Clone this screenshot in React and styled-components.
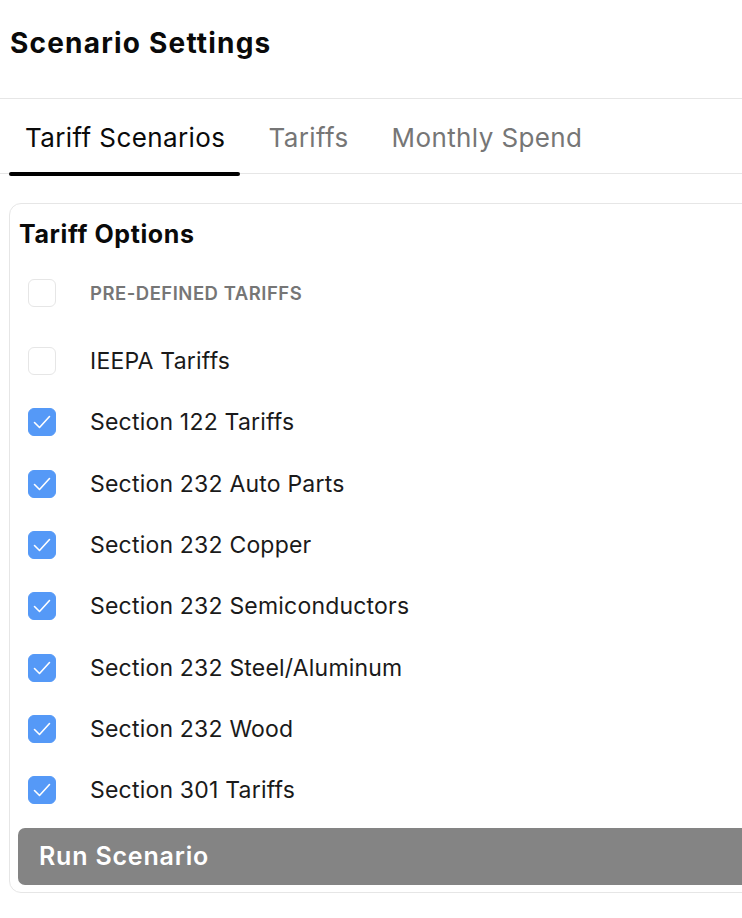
import React from "react";
import styled, { createGlobalStyle } from "styled-components";

const Global = createGlobalStyle`
  html, body { margin: 0; padding: 0; background: #fff; overflow: hidden; }
  body { font-family: Inter, "Noto Sans", "Liberation Sans", sans-serif; color: #111; }
`;

const Page = styled.div`
  width: 820px;
`;

const Header = styled.div`
  height: 99px;
  border-bottom: 1px solid #e6e6e6;
  padding: 26px 0 0 10px;
  box-sizing: border-box;
`;

const Title = styled.h1`
  margin: 0;
  font-size: 28px;
  line-height: 34px;
  font-weight: 700;
  letter-spacing: 1.2px;
  color: #0a0a0a;
`;

const TabBar = styled.div`
  display: flex;
  gap: 12px;
  height: 75px;
  padding-left: 9px;
  border-bottom: 1px solid #e6e6e6;
  box-sizing: border-box;
`;

const Tab = styled.div`
  position: relative;
  display: flex;
  align-items: center;
  padding: 2px 15px 0 16px;
  font-size: 26px;
  letter-spacing: 0.4px;
  color: ${(p) => (p.$active ? "#0a0a0a" : "#767676")};
  &::after {
    content: "";
    display: ${(p) => (p.$active ? "block" : "none")};
    position: absolute;
    left: 0;
    right: 0;
    bottom: -3px;
    height: 4px;
    border-radius: 2px;
    background: #000;
  }
`;

const Body = styled.div`
  padding: 29px 0 0 9px;
`;

const Card = styled.div`
  border: 1px solid #e6e6e6;
  border-radius: 12px;
  padding: 14px 8px 7px 8px;
`;

const CardTitle = styled.h2`
  margin: 0 0 0 1px;
  font-size: 25px;
  line-height: 32px;
  font-weight: 700;
  letter-spacing: 0.6px;
  color: #0a0a0a;
`;

const List = styled.div`
  display: flex;
  flex-direction: column;
  margin-top: 11px;
`;

const Row = styled.label`
  display: flex;
  align-items: center;
  height: ${(p) => (p.$header ? "69.5px" : "61.3px")};
  padding: 0 0 ${(p) => (p.$header ? "6.5px" : "0")} 10px;
  box-sizing: border-box;
`;

const Box = styled.span`
  width: 28px;
  height: 28px;
  box-sizing: border-box;
  border-radius: 6px;
  border: 1px solid ${(p) => (p.$checked ? "#5599f7" : "#e6e6e6")};
  background: ${(p) => (p.$checked ? "#5599f7" : "#fff")};
  display: flex;
  align-items: center;
  justify-content: center;
  flex-shrink: 0;
`;

const Label = styled.span`
  margin-left: 34px;
  font-size: 23px;
  letter-spacing: 0.2px;
  color: #1a1a1a;
`;

const HeaderLabel = styled.span`
  margin-left: 34px;
  font-size: 18.5px;
  font-weight: 600;
  letter-spacing: 0.5px;
  color: #767676;
  text-transform: uppercase;
`;

const RunButton = styled.button`
  display: flex;
  align-items: center;
  width: 100%;
  height: 57px;
  margin-top: 7px;
  border: none;
  border-radius: 7px;
  background: #848484;
  color: #fff;
  font-family: inherit;
  font-size: 25px;
  font-weight: 600;
  letter-spacing: 0.8px;
  padding: 0 0 0 21px;
  text-align: left;
`;

const Check = () => (
  <svg width="20" height="16" viewBox="0 0 20 16" fill="none">
    <path d="M2.5 8.5 L7.5 13.5 L17.5 2.5" stroke="#fff" strokeWidth="1.6" strokeLinecap="round" strokeLinejoin="round" />
  </svg>
);

const items = [
  { label: "IEEPA Tariffs", checked: false },
  { label: "Section 122 Tariffs", checked: true },
  { label: "Section 232 Auto Parts", checked: true },
  { label: "Section 232 Copper", checked: true },
  { label: "Section 232 Semiconductors", checked: true },
  { label: "Section 232 Steel/Aluminum", checked: true },
  { label: "Section 232 Wood", checked: true },
  { label: "Section 301 Tariffs", checked: true },
];

export default function App() {
  return (
    <Page>
      <Global />
      <Header>
        <Title>Scenario Settings</Title>
      </Header>
      <TabBar>
        <Tab $active>Tariff Scenarios</Tab>
        <Tab>Tariffs</Tab>
        <Tab>Monthly Spend</Tab>
      </TabBar>
      <Body>
        <Card>
          <CardTitle>Tariff Options</CardTitle>
          <List>
            <Row $header>
              <Box />
              <HeaderLabel>Pre-defined Tariffs</HeaderLabel>
            </Row>
            {items.map((it) => (
              <Row key={it.label}>
                <Box $checked={it.checked}>{it.checked && <Check />}</Box>
                <Label>{it.label}</Label>
              </Row>
            ))}
          </List>
          <RunButton>Run Scenario</RunButton>
        </Card>
      </Body>
    </Page>
  );
}
